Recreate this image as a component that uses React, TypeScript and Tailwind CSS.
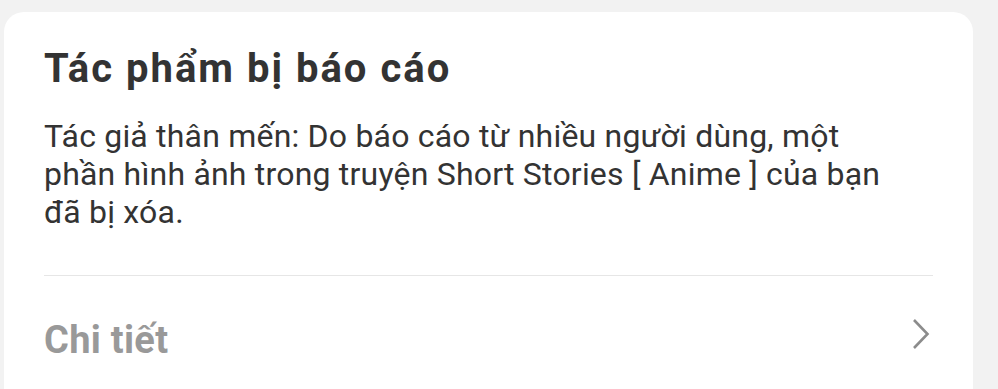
export default function App() {
  return (
    <div className="min-h-screen bg-[#f2f2f2] pt-3 pl-1 overflow-hidden" style={{ fontFamily: 'Roboto, "Noto Sans", sans-serif' }}>
      <div className="w-[969px] h-[400px] rounded-[20px] bg-white px-10 pt-[33px]">
        <h1 className="text-[40px] leading-[48px] font-bold tracking-[2px] text-[#333333]">Tác phẩm bị báo cáo</h1>
        <p className="mt-[24px] text-[32px] leading-[38px] tracking-[0.2px] text-[#333333]">
          Tác giả thân mến: Do báo cáo từ nhiều người dùng, một
          <br />
          phần hình ảnh trong truyện Short Stories [ Anime ] của bạn
          <br />
          đã bị xóa.
        </p>
        <div className="mt-[44px] h-px bg-[#e6e6e6]" />
        <div className="flex items-start justify-between">
          <span className="mt-[42px] text-[38px] leading-[44px] font-bold tracking-[0.3px] text-[#999999]">Chi tiết</span>
          <svg width="18" height="32" viewBox="0 0 18 32" className="mt-[42px] mr-[3px]">
            <path d="M2 2 L15.5 16 L2 30" fill="none" stroke="#8c8c8c" strokeWidth="2.6" />
          </svg>
        </div>
      </div>
    </div>
  );
}
